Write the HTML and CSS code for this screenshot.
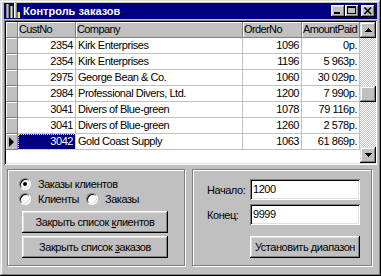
FILE: index.html
```html
<!DOCTYPE html>
<html>
<head>
<meta charset="utf-8">
<title>Контроль заказов</title>
<link rel="stylesheet" href="styles.css">
</head>
<body>
<div class="window">
  <div class="titlebar">
    <svg class="appicon" width="16" height="16" viewBox="0 0 16 16" shape-rendering="crispEdges">
      <rect x="1" y="1" width="3" height="14" fill="#808080"/>
      <rect x="2" y="1" width="1" height="14" fill="#c0c0c0"/>
      <rect x="5" y="3" width="3" height="12" fill="#808080"/>
      <rect x="6" y="3" width="1" height="12" fill="#dfdfdf"/>
      <rect x="9" y="0" width="3" height="15" fill="#c0c0c0"/>
      <rect x="9" y="0" width="1" height="15" fill="#fff"/>
      <rect x="11" y="0" width="1" height="15" fill="#808080"/>
      <rect x="12" y="9" width="3" height="6" fill="#ffff00"/>
      <rect x="12" y="9" width="1" height="6" fill="#808000"/>
    </svg>
    <span class="title">Контроль заказов</span>
    <div class="tbtns">
      <span class="tbtn"><svg width="14" height="12" viewBox="0 0 14 12" shape-rendering="crispEdges"><rect x="3" y="7" width="6" height="2" fill="#000"/></svg></span>
      <span class="tbtn"><svg width="14" height="12" viewBox="0 0 14 12" shape-rendering="crispEdges"><rect x="2.5" y="1.5" width="8" height="7" fill="none" stroke="#000"/><rect x="2" y="1" width="9" height="2" fill="#000"/></svg></span>
      <span class="tbtn close"><svg width="14" height="12" viewBox="0 0 14 12"><path d="M3.5 2.5 L10 9 M10 2.5 L3.5 9" stroke="#000" stroke-width="1.6" fill="none"/></svg></span>
    </div>
  </div>

  <div class="grid">
    <div class="table">
      <div class="row hd">
        <div class="cell ind"></div>
        <div class="cell">CustNo</div>
        <div class="cell">Company</div>
        <div class="cell">OrderNo</div>
        <div class="cell">AmountPaid</div>
      </div>
      <div class="row">
        <div class="cell ind"></div>
        <div class="cell num">2354</div>
        <div class="cell">Kirk Enterprises</div>
        <div class="cell num">1096</div>
        <div class="cell num">0р.</div>
      </div>
      <div class="row">
        <div class="cell ind"></div>
        <div class="cell num">2354</div>
        <div class="cell">Kirk Enterprises</div>
        <div class="cell num">1196</div>
        <div class="cell num">5 963р.</div>
      </div>
      <div class="row">
        <div class="cell ind"></div>
        <div class="cell num">2975</div>
        <div class="cell">George Bean &amp; Co.</div>
        <div class="cell num">1060</div>
        <div class="cell num">30 029р.</div>
      </div>
      <div class="row">
        <div class="cell ind"></div>
        <div class="cell num">2984</div>
        <div class="cell">Professional Divers, Ltd.</div>
        <div class="cell num">1200</div>
        <div class="cell num">7 990р.</div>
      </div>
      <div class="row">
        <div class="cell ind"></div>
        <div class="cell num">3041</div>
        <div class="cell">Divers of Blue-green</div>
        <div class="cell num">1078</div>
        <div class="cell num">79 116р.</div>
      </div>
      <div class="row">
        <div class="cell ind"></div>
        <div class="cell num">3041</div>
        <div class="cell">Divers of Blue-green</div>
        <div class="cell num">1260</div>
        <div class="cell num">2 578р.</div>
      </div>
      <div class="row">
        <div class="cell ind cur"><span class="tri"></span></div>
        <div class="cell num sel">3042</div>
        <div class="cell">Gold Coast Supply</div>
        <div class="cell num">1063</div>
        <div class="cell num">61 869р.</div>
      </div>
    </div>
    <div class="vscroll">
      <div class="sbtn"><svg width="7" height="4" viewBox="0 0 7 4" shape-rendering="crispEdges"><path d="M3 0h1v1h1v1h1v1h1v1H0V3h1V2h1V1h1z" fill="#000"/></svg></div>
      <div class="track"><div class="thumb"></div></div>
      <div class="sbtn"><svg width="7" height="4" viewBox="0 0 7 4" shape-rendering="crispEdges"><path d="M0 0h7v1H6v1H5v1H4v1H3V3H2V2H1V1H0z" fill="#000"/></svg></div>
    </div>
  </div>

  <div class="bottom">
    <div class="group left">
      <div class="optrow">
        <span class="opt"><span class="radio on"></span><span>Заказы клиентов</span></span>
      </div>
      <div class="optrow">
        <span class="opt first"><span class="radio"></span><span>Клиенты</span></span>
        <span class="opt"><span class="radio"></span><span>Заказы</span></span>
      </div>
      <div class="btn wide b1"><span>Закрыть список <u>к</u>лиентов</span></div>
      <div class="btn wide b2"><span>Закрыть список <u>з</u>аказов</span></div>
    </div>
    <div class="group right">
      <div class="field">
        <span class="lbl">Начало:</span>
        <span class="input">1200</span>
      </div>
      <div class="field f2">
        <span class="lbl">Конец:</span>
        <span class="input">9999</span>
      </div>
      <div class="btn range"><span>Установить диапазон</span></div>
    </div>
  </div>
</div>
</body>
</html>
```
FILE: styles.css
```css
* { box-sizing: border-box; }
html, body { margin: 0; padding: 0; background: #c0c0c0; }
body {
  font-family: "Liberation Sans", Arial, sans-serif;
  font-size: 11px;
  letter-spacing: -0.45px;
  color: #000;
}
.window {
  width: 381px;
  height: 276px;
  padding: 3px 4px 4px 4px;
  background: #c0c0c0;
  box-shadow: inset -1px -1px #000, inset 1px 1px #dfdfdf, inset -2px -2px #808080, inset 2px 2px #fff;
  display: flex;
  flex-direction: column;
}
.titlebar {
  flex: none;
  height: 16px;
  background: #000080;
  display: flex;
  align-items: center;
  padding: 0 2px 0 1px;
}
.appicon { flex: none; }
.title {
  flex: 1;
  margin-left: 2px;
  color: #fff;
  font-weight: bold;
  letter-spacing: 0;
}
.tbtns { display: flex; }
.tbtn {
  width: 14px;
  height: 12px;
  display: flex;
  background: #c0c0c0;
  box-shadow: inset -1px -1px #000, inset 1px 1px #fff, inset -2px -2px #808080, inset 2px 2px #dfdfdf;
}
.tbtn.close { margin-left: 2px; }

.grid {
  flex: none;
  margin-top: 1px;
  height: 145px;
  padding: 2px;
  display: flex;
  background: #fff;
  box-shadow: inset 1px 1px #808080, inset -1px -1px #fff, inset 2px 2px #000, inset -2px -2px #dfdfdf;
}
.table { flex: 1; background: #fff; }
.row {
  display: grid;
  grid-template-columns: 12px 58px 167px 59px 58px;
  height: 16px;
}
.cell {
  border-right: 1px solid #c0c0c0;
  border-bottom: 1px solid #c0c0c0;
  padding: 0 2px;
  line-height: 15px;
  white-space: nowrap;
  overflow: hidden;
}
.num { text-align: right; }
.hd .cell, .cell.ind {
  background: #c0c0c0;
  border-color: #808080;
  box-shadow: inset 1px 1px #fff;
}
.hd .cell { padding-left: 1px; padding-right: 0; letter-spacing: -0.6px; }
.cur { display: flex; align-items: center; justify-content: center; }
.tri {
  width: 0;
  height: 0;
  border-left: 5px solid #000;
  border-top: 5px solid transparent;
  border-bottom: 5px solid transparent;
}
.sel {
  background: #000080;
  color: #fff;
  outline: 1px dotted #ffff00;
  outline-offset: -1px;
}
.vscroll {
  flex: none;
  width: 16px;
  display: flex;
  flex-direction: column;
}
.sbtn, .thumb {
  height: 16px;
  background: #c0c0c0;
  box-shadow: inset -1px -1px #000, inset 1px 1px #dfdfdf, inset -2px -2px #808080, inset 2px 2px #fff;
  display: flex;
  align-items: center;
  justify-content: center;
  flex: none;
}
.track {
  flex: 1;
  padding-top: 48px;
  background: repeating-conic-gradient(#c0c0c0 0 25%, #fff 0 50%) 0 0 / 2px 2px;
}

.bottom {
  flex: none;
  display: flex;
  gap: 7px;
  margin-top: 4px;
  padding-left: 3px;
}
.group {
  height: 97px;
  border: 1px solid #808080;
  box-shadow: inset 1px 1px #fff, 1px 1px #fff;
}
.group.left {
  width: 178px;
  padding: 6px 0 0 11px;
}
.group.right {
  width: 180px;
  padding: 9px 0 0 14px;
}
.optrow {
  height: 15px;
  display: flex;
  align-items: center;
}
.opt {
  display: inline-flex;
  align-items: center;
  gap: 7px;
}
.opt.first { width: 67px; }
.radio {
  width: 12px;
  height: 12px;
  border-radius: 50%;
  background: #fff;
  border: 1px solid;
  border-color: #808080 #fff #fff #808080;
  box-shadow: inset 1px 1px #000, inset -1px -1px #dfdfdf;
  display: flex;
  align-items: center;
  justify-content: center;
  flex: none;
}
.radio.on::after {
  content: "";
  width: 4px;
  height: 4px;
  border-radius: 50%;
  background: #000;
}
.btn {
  height: 22px;
  display: flex;
  align-items: center;
  justify-content: center;
  background: #c0c0c0;
  box-shadow: inset -1px -1px #000, inset 1px 1px #fff, inset -2px -2px #808080, inset 2px 2px #dfdfdf;
  white-space: nowrap;
}
.btn.wide { width: 146px; margin-left: 3px; }
.btn.b1 { margin-top: 5px; }
.btn.b2 { margin-top: 3px; }
.field {
  display: flex;
  align-items: center;
  height: 21px;
}
.field.f2 { margin-top: 4px; }
.lbl { width: 43px; }
.input {
  width: 110px;
  height: 21px;
  line-height: 21px;
  padding: 0 3px;
  background: #fff;
  box-shadow: inset 1px 1px #808080, inset -1px -1px #fff, inset 2px 2px #000, inset -2px -2px #dfdfdf;
}
.btn.range {
  width: 110px;
  margin: 11px 0 0 43px;
}
```
